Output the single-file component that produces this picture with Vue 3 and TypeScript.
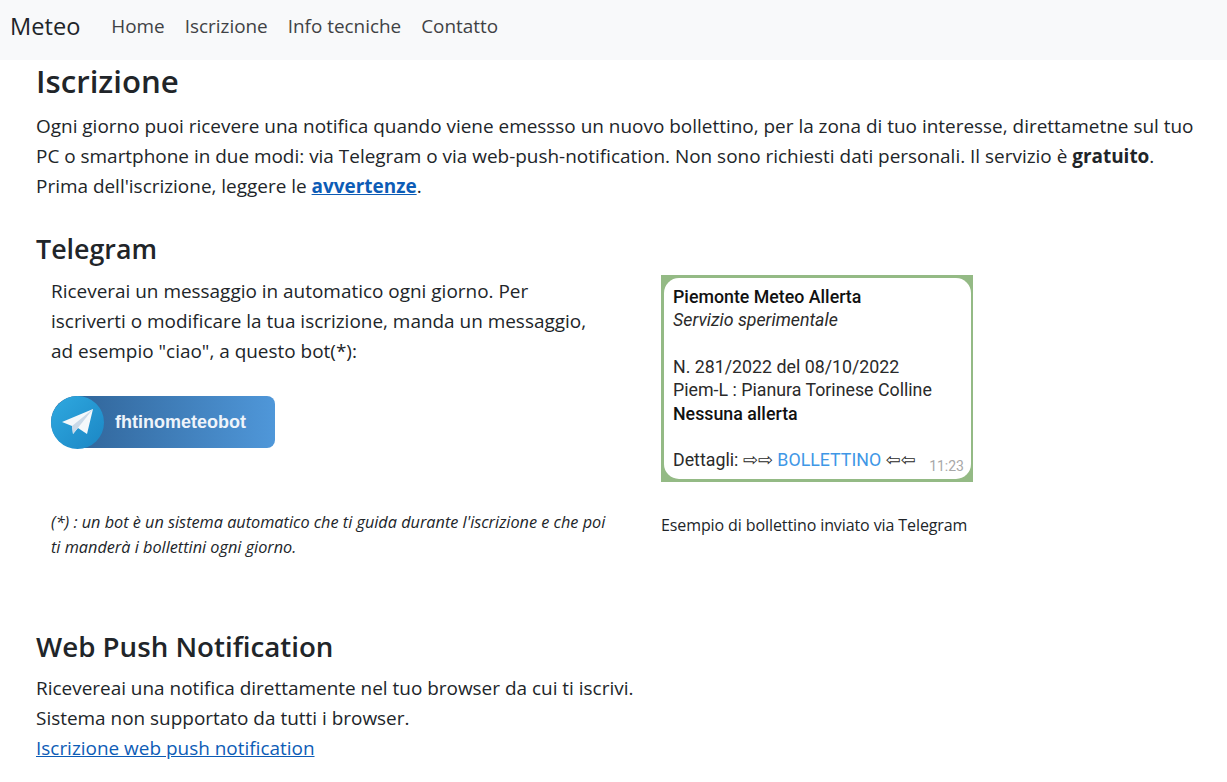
<script setup lang="ts">
const links: string[] = ['Home', 'Iscrizione', 'Info tecniche', 'Contatto']
</script>

<template>
  <div class="page">
    <nav class="navbar">
      <a class="brand">Meteo</a>
      <a v-for="l in links" :key="l" class="nav-link">{{ l }}</a>
    </nav>
    <main class="content">
      <h1>Iscrizione</h1>
      <p class="intro">Ogni giorno puoi ricevere una notifica quando viene emessso un nuovo bollettino, per la zona di tuo interesse, direttametne sul tuo PC o smartphone in due modi: via Telegram o via web-push-notification. Non sono richiesti dati personali. Il servizio è <b>gratuito</b>. Prima dell'iscrizione, leggere le <a class="link"><b>avvertenze</b></a>.</p>
      <h2 class="telegram-title">Telegram</h2>
      <div class="telegram">
        <div class="left">
          <p class="desc">Riceverai un messaggio in automatico ogni giorno. Per iscriverti o modificare la tua iscrizione, manda un messaggio, ad esempio "ciao", a questo bot(*):</p>
          <div class="bot">
            <div class="bot-circle">
              <svg width="34" height="30" viewBox="0 0 34 30">
                <path d="M1 15 L32 2 L26 27 L17 21 L12 27 L11 19 Z" fill="#f4f8fb" />
                <path d="M11 19 L32 2 L16 22 L12 27 Z" fill="#c9d9e8" />
              </svg>
            </div>
            <span class="bot-name">fhtinometeobot</span>
          </div>
          <p class="note">(*) : un bot è un sistema automatico che ti guida durante l'iscrizione e che poi ti manderà i bollettini ogni giorno.</p>
        </div>
        <div class="right">
          <div class="shot">
            <div class="bubble">
              <div class="strong">Piemonte Meteo Allerta</div>
              <div class="it">Servizio sperimentale</div>
              <div class="blank"></div>
              <div>N. 281/2022 del 08/10/2022</div>
              <div>Piem-L : Pianura Torinese Colline</div>
              <div class="strong">Nessuna allerta</div>
              <div class="blank"></div>
              <div>Dettagli: <span class="arrows">⇨⇨</span> <span class="tg-link">BOLLETTINO</span> <span class="arrows">⇦⇦</span></div>
              <span class="time">11:23</span>
            </div>
          </div>
          <p class="caption">Esempio di bollettino inviato via Telegram</p>
        </div>
      </div>
      <h2 class="push-title">Web Push Notification</h2>
      <p class="push">Ricevereai una notifica direttamente nel tuo browser da cui ti iscrivi.<br />Sistema non supportato da tutti i browser.<br /><a class="link">Iscrizione web push notification</a></p>
    </main>
  </div>
</template>

<style>
html, body { margin: 0; background: #fff; }
</style>

<style scoped>
.page {
  font-family: "Open Sans", "Noto Sans", sans-serif;
  color: #212529;
  font-size: 18.95px;
  line-height: 30px;
  height: 782px;
  overflow: hidden;
}
.navbar {
  height: 60px;
  background: #f8f9fa;
  display: flex;
  align-items: center;
  padding-left: 10px;
  padding-bottom: 8px;
  box-sizing: border-box;
}
.brand { font-size: 23.6px; color: #212529; margin-right: 31px; }
.nav-link { font-size: 18.9px; color: #3f4245; margin-right: 20px; }
.content { padding: 0 26px 0 36px; }
h1, h2 { font-weight: 600; margin: 0; color: #212529; }
h1 { font-size: 31.2px; padding-top: 2px; line-height: 38px; }
h2 { line-height: 34px; }
p { margin: 0; }
.intro { margin-top: 11px; }
b { font-weight: 700; }
.link { color: #0d5cb6; text-decoration: underline; }
.telegram-title { margin-top: 31px; font-size: 26.8px; }
.telegram { display: flex; margin-top: 9px; }
.left { width: 610px; padding-left: 15px; box-sizing: border-box; }
.desc { width: 540px; margin-top: 1px; }
.bot {
  margin-top: 30px;
  width: 224px;
  height: 52px;
  border-radius: 26px 8px 8px 26px;
  background: linear-gradient(90deg, #2d5f92, #4f97d9);
  display: flex;
  align-items: center;
}
.bot-circle {
  width: 53px;
  height: 53px;
  border-radius: 50%;
  background: linear-gradient(135deg, #2fa9e0, #1b86c4);
  display: flex;
  align-items: center;
  justify-content: center;
  flex-shrink: 0;
}
.bot-name { margin-left: 11px; color: #eef4fa; font: 700 18px/1 "Liberation Sans", sans-serif; }
.note { margin-top: 62px; font-size: 16.25px; line-height: 25px; font-style: italic; width: 560px; }
.right { margin-left: 15px; }
.shot {
  width: 312px;
  height: 207px;
  box-sizing: border-box;
  padding: 3px 2px 3px 3px;
  background: #94ba85;
}
.bubble {
  position: relative;
  height: 100%;
  box-sizing: border-box;
  padding: 6.5px 0 0 9px;
  border-radius: 15px;
  background: #fff;
  font-family: Roboto, sans-serif;
  font-size: 17.8px;
  line-height: 23.4px;
  color: #2a2a2a;
}
.strong { font-weight: 500; color: #111; }
.it { font-style: italic; }
.blank { height: 23.4px; }
.arrows { font-family: "DejaVu Sans", sans-serif; font-size: 18px; line-height: 1; }
.tg-link { color: #3f97e6; }
.time { position: absolute; right: 7px; bottom: 4px; font-size: 14px; line-height: 18px; color: #a8a8a8; }
.caption { margin-top: 28px; font-size: 16px; line-height: 30px; letter-spacing: -0.1px; }
.push-title { margin-top: 69px; font-size: 27.7px; }
.push { margin-top: 10px; }
</style>
